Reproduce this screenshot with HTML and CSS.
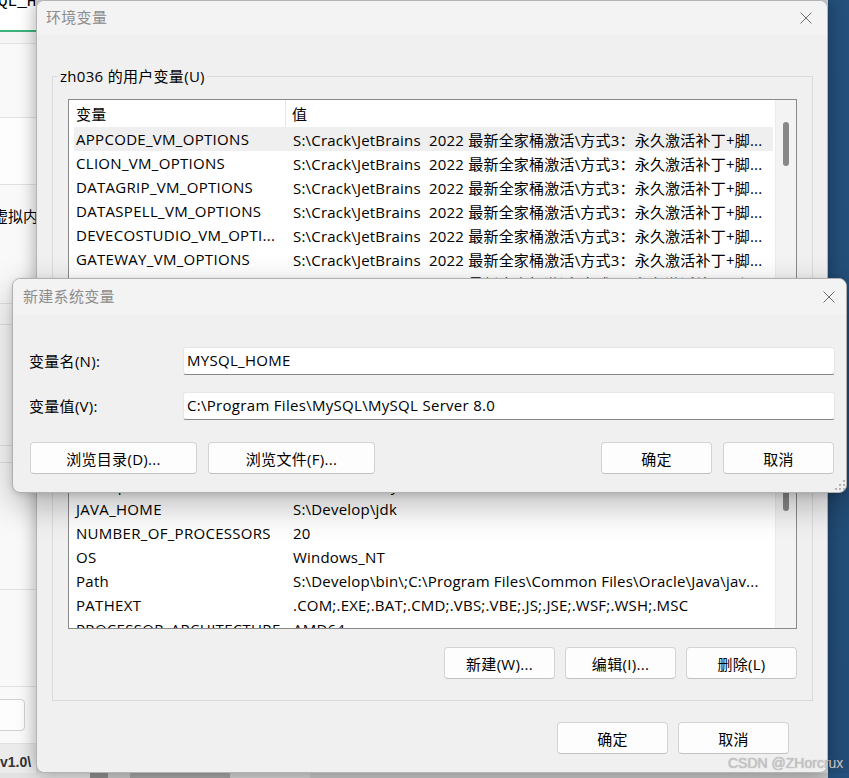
FILE: index.html
```html
<!DOCTYPE html>
<html lang="zh-CN">
<head>
<meta charset="utf-8">
<title>环境变量</title>
<link rel="stylesheet" href="styles.css">
</head>
<body>
<div class="screen">
  <div class="stage">
    <aside class="bgapp">
      <div class="bg-top"><span class="bg-top-text">QL_HOME</span></div>
      <div class="bg-accent"></div>
      <div class="bg-sec h12"></div>
      <div class="bg-sec h74"></div>
      <div class="bg-sec h67 white"></div>
      <div class="bg-sec h119"><span class="bg-label">虚拟内存</span></div>
      <div class="bg-sec h21"></div>
      <div class="bg-sec h121"></div>
      <div class="bg-sec h17"></div>
      <div class="bg-sec h127"></div>
      <div class="bg-sec h97"></div>
      <div class="bg-sec h57"><div class="bg-btn"></div></div>
      <div class="bg-foot">v1.0\</div>
    </aside>

    <section class="envwin">
      <header class="titlebar">
        <span class="title">环境变量</span>
        <svg class="close" width="12" height="12" viewBox="0 0 12 12"><path d="M0.5 0.5L11.5 11.5M11.5 0.5L0.5 11.5" stroke="#6e6e6e" stroke-width="1" fill="none"/></svg>
      </header>
      <div class="envbody">
        <fieldset class="group">
          <legend>zh036 的用户变量(U)</legend>
          <div class="listview">
            <div class="lv-main">
              <div class="lv-head">
                <div class="h-name">变量</div>
                <div class="h-val">值</div>
              </div>
              <div class="lv-rows">
                <div class="row hot"><span class="n">APPCODE_VM_OPTIONS</span><span class="v">S:\Crack\JetBrains  2022 最新全家桶激活\方式3：永久激活补丁+脚...</span></div>
                <div class="row"><span class="n">CLION_VM_OPTIONS</span><span class="v">S:\Crack\JetBrains  2022 最新全家桶激活\方式3：永久激活补丁+脚...</span></div>
                <div class="row"><span class="n">DATAGRIP_VM_OPTIONS</span><span class="v">S:\Crack\JetBrains  2022 最新全家桶激活\方式3：永久激活补丁+脚...</span></div>
                <div class="row"><span class="n">DATASPELL_VM_OPTIONS</span><span class="v">S:\Crack\JetBrains  2022 最新全家桶激活\方式3：永久激活补丁+脚...</span></div>
                <div class="row"><span class="n">DEVECOSTUDIO_VM_OPTI...</span><span class="v">S:\Crack\JetBrains  2022 最新全家桶激活\方式3：永久激活补丁+脚...</span></div>
                <div class="row"><span class="n">GATEWAY_VM_OPTIONS</span><span class="v">S:\Crack\JetBrains  2022 最新全家桶激活\方式3：永久激活补丁+脚...</span></div>
                <div class="row"><span class="n">GOLAND_VM_OPTIONS</span><span class="v">S:\Crack\JetBrains  2022 最新全家桶激活\方式3：永久激活补丁+脚...</span></div>
                <div class="row"><span class="n">IDEA_VM_OPTIONS</span><span class="v">S:\Crack\JetBrains  2022 最新全家桶激活\方式3：永久激活补丁+脚...</span></div>
                <div class="row"><span class="n">JETBRAINSCLIENT_VM_OP...</span><span class="v">S:\Crack\JetBrains  2022 最新全家桶激活\方式3：永久激活补丁+脚...</span></div>
                <div class="row"><span class="n">PHPSTORM_VM_OPTIONS</span><span class="v">S:\Crack\JetBrains  2022 最新全家桶激活\方式3：永久激活补丁+脚...</span></div>
                <div class="row"><span class="n">PYCHARM_VM_OPTIONS</span><span class="v">S:\Crack\JetBrains  2022 最新全家桶激活\方式3：永久激活补丁+脚...</span></div>
                <div class="row"><span class="n">RIDER_VM_OPTIONS</span><span class="v">S:\Crack\JetBrains  2022 最新全家桶激活\方式3：永久激活补丁+脚...</span></div>
                <div class="row"><span class="n">RUBYMINE_VM_OPTIONS</span><span class="v">S:\Crack\JetBrains  2022 最新全家桶激活\方式3：永久激活补丁+脚...</span></div>
                <div class="row"><span class="n">WEBSTORM_VM_OPTIONS</span><span class="v">S:\Crack\JetBrains  2022 最新全家桶激活\方式3：永久激活补丁+脚...</span></div>
                <div class="lv-gap"></div>
                <div class="row"><span class="n">ComSpec</span><span class="v">C:\Windows\system32\cmd.exe</span></div>
                <div class="row"><span class="n">JAVA_HOME</span><span class="v">S:\Develop\jdk</span></div>
                <div class="row"><span class="n">NUMBER_OF_PROCESSORS</span><span class="v">20</span></div>
                <div class="row"><span class="n">OS</span><span class="v">Windows_NT</span></div>
                <div class="row"><span class="n">Path</span><span class="v">S:\Develop\bin\;C:\Program Files\Common Files\Oracle\Java\jav...</span></div>
                <div class="row"><span class="n">PATHEXT</span><span class="v">.COM;.EXE;.BAT;.CMD;.VBS;.VBE;.JS;.JSE;.WSF;.WSH;.MSC</span></div>
                <div class="row"><span class="n">PROCESSOR_ARCHITECTURE</span><span class="v">AMD64</span></div>
              </div>
            </div>
            <div class="lv-scroll">
              <div class="thumb t1"></div>
              <div class="thumb t2"></div>
            </div>
          </div>
          <div class="btnrow group-btns">
            <button class="btn w111">新建(W)...</button>
            <button class="btn w111">编辑(I)...</button>
            <button class="btn w111">删除(L)</button>
          </div>
        </fieldset>
        <div class="btnrow env-foot">
          <button class="btn w111">确定</button>
          <button class="btn w111">取消</button>
        </div>
      </div>
    </section>

    <div class="desktop"></div>
  </div>
  <div class="taskstrip">
    <span class="ts a"></span><span class="ts b"></span><span class="ts c"></span><span class="ts d"></span><span class="ts e"></span><span class="ts f"></span><span class="ts g"></span>
  </div>

  <div class="nv">
    <header class="nv-title">
      <span class="title">新建系统变量</span>
      <svg class="close" width="12" height="12" viewBox="0 0 12 12"><path d="M0.5 0.5L11.5 11.5M11.5 0.5L0.5 11.5" stroke="#6e6e6e" stroke-width="1" fill="none"/></svg>
    </header>
    <div class="nv-body">
      <div class="nv-grid">
        <label class="nv-label">变量名(N):</label>
        <div class="field">MYSQL_HOME</div>
        <label class="nv-label">变量值(V):</label>
        <div class="field">C:\Program Files\MySQL\MySQL Server 8.0</div>
      </div>
      <div class="nv-btns">
        <button class="btn w167">浏览目录(D)...</button>
        <button class="btn w167">浏览文件(F)...</button>
        <span class="spacer"></span>
        <button class="btn w111">确定</button>
        <button class="btn w111">取消</button>
      </div>
    </div>
    <svg class="grip" width="10" height="10" viewBox="0 0 10 10">
      <rect x="8" y="0" width="2" height="2" fill="#b3b3b3"/>
      <rect x="4" y="4" width="2" height="2" fill="#b3b3b3"/>
      <rect x="8" y="4" width="2" height="2" fill="#b3b3b3"/>
      <rect x="0" y="8" width="2" height="2" fill="#b3b3b3"/>
      <rect x="4" y="8" width="2" height="2" fill="#b3b3b3"/>
      <rect x="8" y="8" width="2" height="2" fill="#b3b3b3"/>
    </svg>
  </div>

  <div class="watermark">CSDN @ZHorcrux</div>
</div>
</body>
</html>
```

FILE: styles.css
```css
* { box-sizing: border-box; }
html, body { margin: 0; padding: 0; }
body {
  width: 849px;
  height: 778px;
  overflow: hidden;
  font-family: "Open Sans", "Noto Sans CJK SC", sans-serif;
  font-size: 15px;
  letter-spacing: 0.3px;
  color: #000;
}
.screen {
  position: relative;
  width: 849px;
  height: 778px;
  display: flex;
  flex-direction: column;
  background: #d9d9d9;
  overflow: hidden;
}
.stage { display: flex; height: 773px; flex: none; }

/* background application on the left */
.bgapp {
  width: 36px;
  flex: none;
  display: flex;
  flex-direction: column;
  background: #f9f9f9;
  overflow: hidden;
  letter-spacing: 0;
}
.bg-top { height: 30px; flex: none; background: #fff; overflow: hidden; }
.bg-top-text {
  display: block;
  margin: -7px 0 0 -2px;
  font-family: "Liberation Mono", monospace;
  font-size: 16px;
  line-height: 18px;
  white-space: nowrap;
}
.bg-accent { height: 2px; flex: none; background: #3db37c; }
.bg-sec { flex: none; border-bottom: 1px solid #e1e1e1; background: #f9f9f9; overflow: hidden; }
.bg-sec.white { background: #fdfdfd; }
.h12 { height: 12px; background: #f5f5f5; }
.h74 { height: 74px; }
.h67 { height: 67px; }
.h119 { height: 119px; }
.h21 { height: 21px; }
.h121 { height: 121px; }
.h17 { height: 17px; }
.h127 { height: 127px; }
.h97 { height: 97px; }
.h57 { height: 57px; padding-top: 12px; }
.bg-label {
  display: block;
  margin: 21px 0 0 -7px;
  line-height: 20px;
  white-space: nowrap;
}
.bg-btn {
  width: 31px;
  height: 32px;
  margin-left: -6px;
  background: #fdfdfd;
  border: 1px solid #d2d2d2;
  border-radius: 4px;
}
.bg-foot {
  flex: 1;
  background: #ebebeb;
  font-family: "Liberation Sans", sans-serif;
  font-weight: bold;
  font-size: 14px;
  line-height: 18px;
  padding-top: 9px;
  padding-left: 0;
  color: #333;
  white-space: nowrap;
}

/* main window */
.envwin {
  width: 792px;
  flex: none;
  position: relative;
  z-index: 1;
  display: flex;
  flex-direction: column;
  background: #f0f0f0;
  border: 1px solid #b4b4b4;
  border-radius: 8px;
  box-shadow: 0 0 18px rgba(0, 0, 0, 0.35);
  overflow: hidden;
}
.titlebar {
  height: 34px;
  flex: none;
  display: flex;
  align-items: center;
  justify-content: space-between;
  padding: 0 15px 0 9px;
  background: #f3f3f3;
}
.title { color: #8d8d8d; font-size: 15px; line-height: 20px; margin-top: -2px; }
.close { flex: none; display: block; }

.envbody {
  flex: 1;
  display: flex;
  flex-direction: column;
  padding: 31px 14px 19px 15px;
}
.group {
  margin: 0;
  padding: 13px 15px 21px;
  border: 1px solid #dadada;
  min-width: 0;
  height: 635px;
  flex: none;
  display: flex;
  flex-direction: column;
}
.group legend {
  padding: 0 2px;
  margin-left: -10px;
  line-height: 20px;
  font-size: 15px;
}

.listview {
  height: 530px;
  flex: none;
  display: flex;
  border: 1px solid #8a8a8a;
  background: #fff;
  overflow: hidden;
}
.lv-main { flex: 1; min-width: 0; display: flex; flex-direction: column; overflow: hidden; }
.lv-head { height: 27px; flex: none; display: flex; }
.h-name {
  width: 217px;
  flex: none;
  padding-left: 7px;
  display: flex;
  align-items: center;
  border-right: 1px solid #e5e5e5;
}
.h-val { padding-left: 6px; display: flex; align-items: center; }
.lv-rows { display: flex; flex-direction: column; padding: 0 2px 0 5px; }
.row {
  height: 24px;
  flex: none;
  display: flex;
  align-items: center;
  white-space: pre;
}
.row.hot { background: #efefef; }
.row .n {
  width: 212px;
  flex: none;
  padding-left: 2px;
  overflow: hidden;
  text-overflow: ellipsis;
}
.row .v {
  flex: 1;
  min-width: 0;
  padding-left: 7px;
  letter-spacing: 0.2px;
  overflow: hidden;
  text-overflow: ellipsis;
}
.lv-gap { height: 10px; flex: none; }
.lv-scroll {
  width: 21px;
  flex: none;
  background: #f3f3f3;
  border-left: 1px solid #ebebeb;
  display: flex;
  flex-direction: column;
  align-items: center;
}
.thumb { width: 6px; background: #878787; border-radius: 3px; flex: none; }
.t1 { margin-top: 22px; height: 44px; }
.t2 { margin-top: 304px; height: 41px; }

.btnrow { display: flex; justify-content: flex-end; }
.group-btns { margin-top: 18px; gap: 10px; }
.env-foot { margin-top: 21px; gap: 10px; margin-right: 24px; }

.btn {
  height: 32px;
  flex: none;
  padding: 0;
  margin: 0;
  border: 1px solid #d3d3d3;
  border-bottom-color: #c2c2c2;
  border-radius: 4px;
  background: #fdfdfd;
  font-family: inherit;
  font-size: 15px;
  letter-spacing: inherit;
  color: #000;
  display: flex;
  align-items: center;
  justify-content: center;
}
.w111 { width: 111px; }
.w167 { width: 167px; }

.desktop {
  flex: 1;
  background: linear-gradient(180deg, #24507b 0%, #234d76 100%);
}

.taskstrip { flex: 1; display: flex; }
.ts { display: block; height: 100%; }
.ts.a { width: 90px; background: #e2e2e2; }
.ts.b { width: 18px; background: #8e8e8e; }
.ts.c { width: 22px; background: #c8c8c8; }
.ts.d { width: 100px; background: #a4a4a4; }
.ts.e { width: 80px; background: #d0d0d0; }
.ts.f { flex: 1; background: #c4c4c4; }
.ts.g { width: 21px; background: #24507b; }

/* new system variable dialog (floating over the main window) */
.nv {
  position: absolute;
  left: 12px;
  top: 278px;
  width: 835px;
  height: 215px;
  z-index: 5;
  display: flex;
  flex-direction: column;
  background: #f0f0f0;
  border: 1px solid #b0b0b0;
  border-radius: 8px;
  box-shadow: 0 12px 34px rgba(0, 0, 0, 0.28), 0 2px 6px rgba(0, 0, 0, 0.12);
  overflow: hidden;
}
.nv-title {
  height: 36px;
  flex: none;
  display: flex;
  align-items: center;
  justify-content: space-between;
  padding: 0 11px 0 10px;
  background: #f3f3f3;
}
.nv-body {
  flex: 1;
  display: flex;
  flex-direction: column;
  padding: 32px 11px 0 16px;
}
.nv-grid {
  display: grid;
  grid-template-columns: 154px 1fr;
  grid-auto-rows: 28px;
  row-gap: 17px;
  align-items: center;
}
.nv-label { line-height: 20px; }
.field {
  height: 28px;
  background: #fff;
  border: 1px solid #e6e6e6;
  border-bottom: 1px solid #868686;
  border-radius: 3px;
  padding: 0 3px 2px;
  display: flex;
  align-items: center;
  white-space: nowrap;
}
.nv-btns {
  margin-top: 22px;
  display: flex;
  gap: 11px;
  padding-left: 1px;
  padding-right: 1px;
}
.spacer { flex: 1; }
.grip { position: absolute; right: 1px; bottom: 2px; }

.watermark {
  position: absolute;
  left: 728px;
  top: 754px;
  z-index: 6;
  font-family: "Liberation Sans", sans-serif;
  font-size: 14px;
  line-height: 18px;
  letter-spacing: 0;
  color: #c4c4c4;
  text-shadow: 0 0 1px rgba(90, 90, 90, 0.5);
  white-space: nowrap;
}
```
